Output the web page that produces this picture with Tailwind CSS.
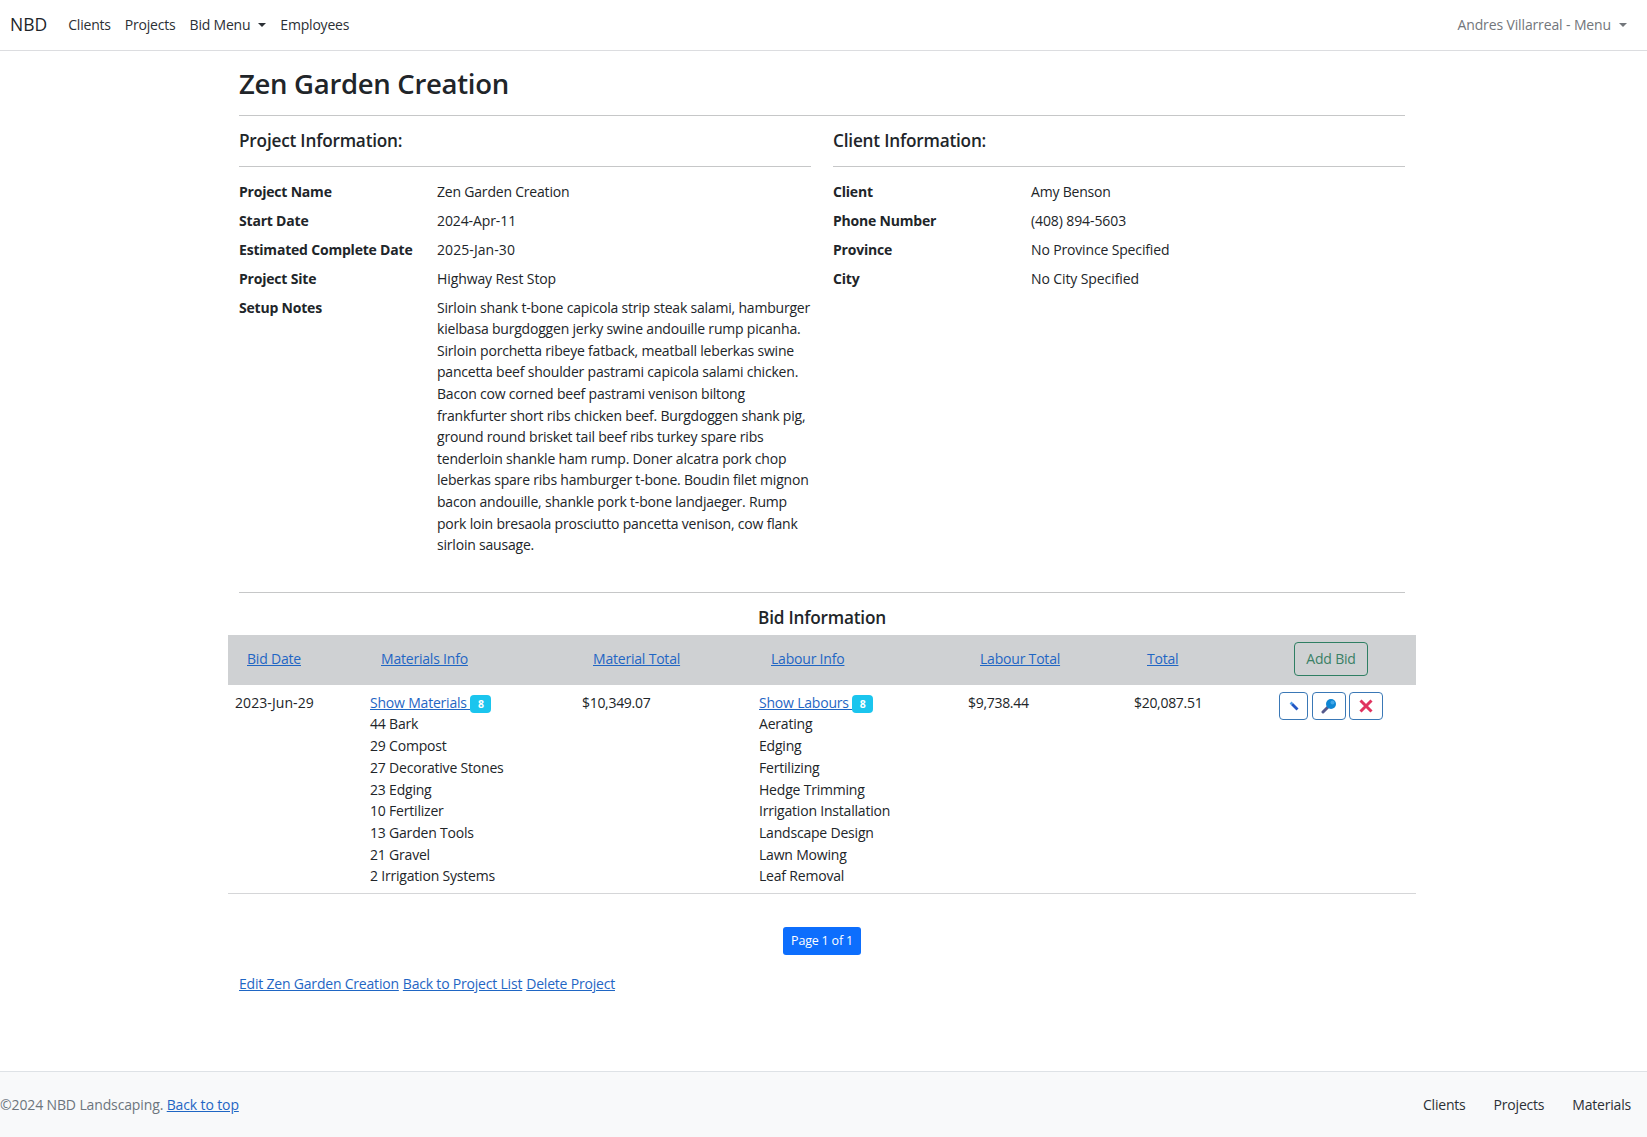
<!DOCTYPE html>
<html lang="en">
  <head>
    <meta charset="utf-8" />
    <meta name="viewport" content="width=device-width, initial-scale=1.0" />
    <title>Zen Garden Creation</title>
    <script src="https://cdn.jsdelivr.net/npm/@tailwindcss/browser@4"></script>
  </head>
  <body class="bg-white text-[#212529] font-['Open_Sans','Noto_Sans',sans-serif] text-[14px] leading-[21.7px] tracking-[-0.2px]">
    <div class="flex flex-col min-h-[1137px]">
      <!-- top nav -->
      <nav class="h-[51px] border-b border-[#dcdde0] flex items-center pl-[10px] pr-[20px] shrink-0">
        <a href="#" class="text-[17.5px] mr-[21px] tracking-normal">NBD</a>
        <a href="#" class="mr-[14px] text-[#2b3035]">Clients</a>
        <a href="#" class="mr-[14px] text-[#2b3035]">Projects</a>
        <a href="#" class="mr-[14px] text-[#2b3035] flex items-center">Bid Menu
          <span class="ml-[8px] w-0 h-0 border-x-[4px] border-x-transparent border-t-[4px] border-t-[#2b3035]"></span>
        </a>
        <a href="#" class="text-[#2b3035]">Employees</a>
        <a href="#" class="ml-auto text-[#72767b] flex items-center tracking-[-0.13px]">Andres Villarreal - Menu
          <span class="ml-[8px] w-0 h-0 border-x-[4px] border-x-transparent border-t-[4px] border-t-[#72767b]"></span>
        </a>
      </nav>

      <main class="ml-[228px] w-[1188px]">
        <div class="px-[11px]">
          <h1 class="text-[27.5px] leading-[36px] font-semibold mt-[15px] tracking-[-0.3px]">Zen Garden Creation</h1>
          <hr class="mt-[13px] border-[#c6c7c8]" />

          <div class="grid grid-cols-2 gap-x-[22px]">
            <!-- project info -->
            <section>
              <h2 class="text-[17.2px] leading-[24px] font-semibold mt-[13px] mb-[13px] tracking-[-0.2px]">Project Information:</h2>
              <hr class="border-[#c6c7c8] mb-[14px]" />
              <dl class="grid grid-cols-[198px_1fr] gap-y-[7.2px]">
                <dt class="font-bold">Project Name</dt>
                <dd>Zen Garden Creation</dd>
                <dt class="font-bold">Start Date</dt>
                <dd class="tracking-[-0.1px]">2024-Apr-11</dd>
                <dt class="font-bold whitespace-nowrap">Estimated Complete Date</dt>
                <dd class="tracking-[0.08px]">2025-Jan-30</dd>
                <dt class="font-bold">Project Site</dt>
                <dd class="tracking-[-0.1px]">Highway Rest Stop</dd>
                <dt class="font-bold">Setup Notes</dt>
                <dd class="leading-[21.6px]">
                  Sirloin shank t-bone capicola strip steak salami, hamburger<br />
                  kielbasa burgdoggen jerky swine andouille rump picanha.<br />
                  Sirloin porchetta ribeye fatback, meatball leberkas swine<br />
                  pancetta beef shoulder pastrami capicola salami chicken.<br />
                  Bacon cow corned beef pastrami venison biltong<br />
                  frankfurter short ribs chicken beef. Burgdoggen shank pig,<br />
                  ground round brisket tail beef ribs turkey spare ribs<br />
                  tenderloin shankle ham rump. Doner alcatra pork chop<br />
                  leberkas spare ribs hamburger t-bone. Boudin filet mignon<br />
                  bacon andouille, shankle pork t-bone landjaeger. Rump<br />
                  pork loin bresaola prosciutto pancetta venison, cow flank<br />
                  sirloin sausage.
                </dd>
              </dl>
            </section>

            <!-- client info -->
            <section>
              <h2 class="text-[17.2px] leading-[24px] font-semibold mt-[13px] mb-[13px] tracking-[-0.2px]">Client Information:</h2>
              <hr class="border-[#c6c7c8] mb-[14px]" />
              <dl class="grid grid-cols-[198px_1fr] gap-y-[7.2px]">
                <dt class="font-bold">Client</dt>
                <dd>Amy Benson</dd>
                <dt class="font-bold">Phone Number</dt>
                <dd class="tracking-[-0.1px]">(408) 894-5603</dd>
                <dt class="font-bold">Province</dt>
                <dd class="tracking-[-0.15px]">No Province Specified</dd>
                <dt class="font-bold">City</dt>
                <dd class="tracking-[-0.1px]">No City Specified</dd>
              </dl>
            </section>
          </div>

          <hr class="mt-[36px] border-[#c6c7c8]" />
          <h3 class="text-center text-[17.2px] leading-[24px] font-semibold mt-[13px] mb-[5px] tracking-[-0.2px]">Bid Information</h3>
        </div>

        <!-- bids table -->
        <table class="w-full table-fixed border-collapse">
          <colgroup>
            <col class="w-[135px]" />
            <col class="w-[212px]" />
            <col class="w-[177px]" />
            <col class="w-[209px]" />
            <col class="w-[166px]" />
            <col class="w-[145px]" />
            <col />
          </colgroup>
          <thead>
            <tr class="bg-[#cfd1d3] h-[50px] text-left font-normal">
              <th class="pl-[19px] pb-[1px] font-normal"><a href="#" class="text-[#1f66c4] underline">Bid Date</a></th>
              <th class="pl-[18px] pb-[1px] font-normal"><a href="#" class="text-[#1f66c4] underline">Materials Info</a></th>
              <th class="pl-[18px] pb-[1px] font-normal"><a href="#" class="text-[#1f66c4] underline">Material Total</a></th>
              <th class="pl-[19px] pb-[1px] font-normal"><a href="#" class="text-[#1f66c4] underline">Labour Info</a></th>
              <th class="pl-[19px] pb-[1px] font-normal"><a href="#" class="text-[#1f66c4] underline">Labour Total</a></th>
              <th class="pl-[20px] pb-[1px] font-normal"><a href="#" class="text-[#1f66c4] underline">Total</a></th>
              <th class="pl-[22px] pb-[1px] font-normal">
                <a href="#" class="inline-flex items-center justify-center w-[74px] h-[34px] border border-[#2f7f63] rounded-[4px] text-[#3a8066]">Add Bid</a>
              </th>
            </tr>
          </thead>
          <tbody>
            <tr class="border-b border-[#d5d6d8] align-top">
              <td class="pl-[7px] pt-[7px] pb-[6px] tracking-[0.08px]">2023-Jun-29</td>
              <td class="pl-[7px] pt-[7px] pb-[6px]">
                <a href="#" class="text-[#1f66c4] underline whitespace-pre">Show Materials </a><span class="inline-block bg-[#1bc5ee] text-white text-[10.5px] leading-[18px] font-bold w-[21px] text-center rounded-[4px]">8</span>
                <div>44 Bark</div>
                <div>29 Compost</div>
                <div>27 Decorative Stones</div>
                <div>23 Edging</div>
                <div>10 Fertilizer</div>
                <div>13 Garden Tools</div>
                <div>21 Gravel</div>
                <div>2 Irrigation Systems</div>
              </td>
              <td class="pl-[7px] pt-[7px] pb-[6px] tracking-[-0.3px]">$10,349.07</td>
              <td class="pl-[7px] pt-[7px] pb-[6px]">
                <a href="#" class="text-[#1f66c4] underline whitespace-pre">Show Labours </a><span class="inline-block bg-[#1bc5ee] text-white text-[10.5px] leading-[18px] font-bold w-[21px] text-center rounded-[4px]">8</span>
                <div>Aerating</div>
                <div>Edging</div>
                <div>Fertilizing</div>
                <div>Hedge Trimming</div>
                <div>Irrigation Installation</div>
                <div>Landscape Design</div>
                <div>Lawn Mowing</div>
                <div>Leaf Removal</div>
              </td>
              <td class="pl-[7px] pt-[7px] pb-[6px] tracking-[-0.3px]">$9,738.44</td>
              <td class="pl-[7px] pt-[7px] pb-[6px] tracking-[-0.3px]">$20,087.51</td>
              <td class="pl-[7px] pt-[7px] pb-[6px]">
                <div class="flex gap-[3.5px]">
                  <a href="#" class="flex items-center justify-center w-[29px] h-[28px] border border-[#3a78b6] rounded-[4px]">
                    <svg width="12" height="12" viewBox="0 0 12 12">
                      <path d="M4 4 L9.5 9.5" stroke="#2257c4" stroke-width="2.8" />
                      <path d="M2.6 2.6 L4.2 4.2" stroke="#4f9be6" stroke-width="2.8" />
                    </svg>
                  </a>
                  <a href="#" class="flex items-center justify-center w-[34px] h-[28px] border border-[#3a78b6] rounded-[4px]">
                    <svg width="16" height="16" viewBox="0 0 16 16">
                      <path d="M2 14 L7 9" stroke="#55598c" stroke-width="3" stroke-linecap="round" />
                      <circle cx="10" cy="6" r="5" fill="#0e86d4" />
                      <circle cx="11.5" cy="4.5" r="2" fill="#3fa6e8" />
                    </svg>
                  </a>
                  <a href="#" class="flex items-center justify-center w-[34px] h-[28px] border border-[#3a78b6] rounded-[4px]">
                    <svg width="14" height="14" viewBox="0 0 14 14">
                      <path d="M1.5 1.5 L12.5 12.5 M12.5 1.5 L1.5 12.5" stroke="#e0335f" stroke-width="3" />
                    </svg>
                  </a>
                </div>
              </td>
            </tr>
          </tbody>
        </table>

        <div class="flex justify-center mt-[33px]">
          <span class="bg-[#0d6efd] text-white text-[12.5px] h-[28px] w-[78px] flex items-center justify-center rounded-[3px]">Page 1 of 1</span>
        </div>

        <div class="pl-[11px] mt-[18px] flex gap-[4px]">
          <a href="#" class="text-[#1f66c4] underline">Edit Zen Garden Creation</a>
          <a href="#" class="text-[#1f66c4] underline">Back to Project List</a>
          <a href="#" class="text-[#1f66c4] underline">Delete Project</a>
        </div>
      </main>

      <footer class="mt-auto h-[66px] bg-[#f8f9fa] border-t border-[#dee2e6] flex items-center justify-between pr-[16px] shrink-0">
        <div class="text-[#6c757d] tracking-[-0.13px]">©2024 NBD Landscaping. <a href="#" class="text-[#1f66c4] underline">Back to top</a></div>
        <div class="flex gap-[28px] text-[#2b3035]">
          <a href="#">Clients</a>
          <a href="#">Projects</a>
          <a href="#">Materials</a>
        </div>
      </footer>
    </div>
  </body>
</html>
